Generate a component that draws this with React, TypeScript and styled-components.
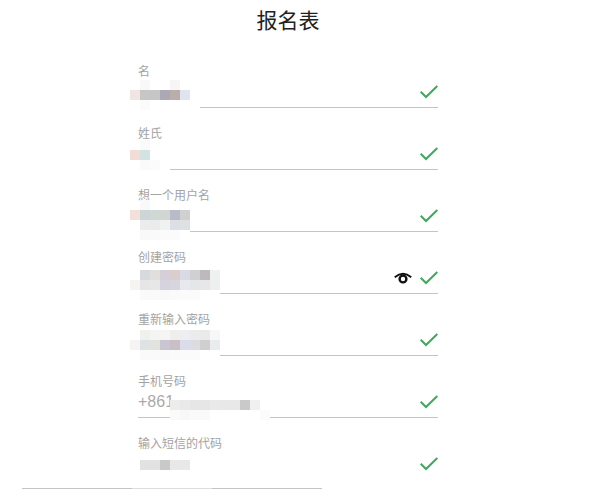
import React from 'react';
import styled, { createGlobalStyle } from 'styled-components';

const GlobalStyle = createGlobalStyle`
  html, body {
    margin: 0;
    padding: 0;
    background: #fff;
    overflow: hidden;
  }
`;

const Page = styled.div`
  width: 608px;
  height: 489px;
  overflow: hidden;
  font-family: "Noto Sans CJK SC", "Liberation Sans", sans-serif;
`;

const Title = styled.h1`
  margin: 0;
  width: 576px;
  height: 46px;
  line-height: 38px;
  text-align: center;
  font-size: 21px;
  font-weight: 400;
  color: #222;
`;

const Form = styled.form`
  display: flex;
  flex-direction: column;
  width: 300px;
  margin-left: 138px;
`;

const Field = styled.div<{ $plain?: boolean }>`
  position: relative;
  box-sizing: border-box;
  height: 62px;
  padding-top: 18px;
  border-bottom: 1px solid ${p => (p.$plain ? 'transparent' : '#c4c4c4')};
`;

const Label = styled.label`
  display: block;
  height: 14px;
  line-height: 14px;
  font-size: 12px;
  color: #a3a3a3;
`;

const Control = styled.div`
  display: flex;
  align-items: center;
  justify-content: space-between;
  height: 24px;
  margin-top: 2px;
`;

const Value = styled.span`
  font-family: "Liberation Sans", sans-serif;
  font-size: 16px;
  color: #aaa;
`;

const Icons = styled.div`
  display: flex;
  align-items: center;
  gap: 8px;
`;

// pixelated blur over the personal data, sits on top of the underline too
const Mosaic = styled.div<{ $top: number }>`
  position: absolute;
  left: -8px;
  top: ${p => p.$top}px;
  display: flex;
  flex-direction: column;
`;

const MosaicRow = styled.div`
  display: flex;
  height: 10px;
`;

const Cell = styled.i.attrs<{ $c: string }>(p => ({
  style: { background: p.$c },
}))<{ $c: string }>`
  display: block;
  width: 10px;
  height: 10px;
`;

const Divider = styled.div`
  width: 300px;
  height: 1px;
  margin: 8px 0 0 22px;
  background: linear-gradient(
    to right,
    #c4c4c4 0 110px,
    #dcdcdc 110px 190px,
    #c4c4c4 190px
  );
`;

const Check = () => (
  <svg width="18" height="14" viewBox="0 0 18 14" fill="none">
    <path d="M0.7 6.8 L6 12 L17.3 1" stroke="#40a85c" strokeWidth="2" />
  </svg>
);

const Eye = () => (
  <svg width="18" height="12" viewBox="0 0 18 12" fill="none">
    <path d="M0.8 5.2 Q9 -1.6 17.2 5.2" stroke="#111" strokeWidth="2" />
    <circle cx="9" cy="7" r="3.4" stroke="#111" strokeWidth="2.4" />
  </svg>
);

const _ = 'transparent';
const w = '#fff';

const fields = [
  {
    label: '名',
    top: 34,
    rows: [
      [_, '#f8f8f7', _, _, '#f8f6f5', _, _],
      ['#efe6e3', '#c6c6c6', '#c6c6c6', '#aca8b4', '#b9aeaa', '#dfe4ee', _],
      [w, '#fbfbfb', w, w, w, w, w],
    ],
  },
  {
    label: '姓氏',
    top: 32,
    rows: [
      [_, '#fafafa', _, _],
      ['#f2ddd6', '#d3e3e2', _, _],
      [w, '#fafafa', '#fbfbfb', w],
    ],
  },
  {
    label: '想一个用户名',
    top: 30,
    rows: [
      [_, '#f9f9f9', _, _, _, _],
      ['#f3e0da', '#cdd5d8', '#d0d8d3', '#d1d5d4', '#b8bcc9', '#cfd1cf'],
      [w, '#ececec', '#eaeceb', '#f0f1f1', '#dcdfe3', '#dfe0e2'],
      [w, '#f9f9f9', '#fafafa', '#fbfbfb', '#fbfbfb', w],
    ],
  },
  {
    label: '创建密码',
    top: 38,
    rows: [
      [_, '#d6dadf', '#e1dfdc', '#d4cfdb', '#dccdcd', '#d8dbe6', '#d0cfd2', '#bdb9bd', '#eef1f0'],
      ['#f6f4f2', '#e6e6e6', '#e7e7e7', '#d7d3de', '#d9d5df', '#e7e9ef', '#e4e6e8', '#e6e7e9', '#eef0f0'],
      [w, '#fafafa', '#fafafa', '#f9f9f9', '#fafafa', '#fbfbfb', '#fbfbfb', w, w],
    ],
  },
  {
    label: '重新输入密码',
    top: 36,
    rows: [
      [_, '#f0f0ee', '#f4f4f2', '#f5f5f3', '#eeeeec', '#eeeef2', '#ecebec', '#ebeaea', '#f6f7f6'],
      ['#f6f4f2', '#dde2e4', '#e2e2de', '#c9c5d2', '#c9bfc4', '#dadcea', '#dcdce0', '#cfcfd0', '#e8ecec'],
      [w, '#fafafa', '#fafafa', '#f9f9f9', '#fafafa', '#fbfbfb', '#fbfbfb', w, w],
    ],
  },
  {
    label: '手机号码',
    value: '+861',
    top: 44,
    rows: [
      [_, _, _, _, '#ececec', '#e9e9e9', '#e6e6e6', '#e6e6e6', '#e9e9e9', '#e8e8e8', '#e8e8e8', '#c9c9c9', '#f0f0f0'],
      [_, _, _, _, '#fafafa', '#f8f8f8', '#fafafa', '#fafafa', w, w, w, w, w, '#fbfbfb'],
    ],
  },
  {
    label: '输入短信的代码',
    top: 42,
    rows: [
      [_, '#e2e2e2', '#e2e2e2', '#c9c9c9', '#e8e8e8', '#e8e8e8'],
    ],
  },
];

const App = () => (
  <Page>
    <GlobalStyle />
    <Title>报名表</Title>
    <Form>
      {fields.map((f, i) => (
        <Field key={f.label} $plain={i === fields.length - 1}>
          <Label>{f.label}</Label>
          <Control>
            <Value>{f.value}</Value>
            <Icons>
              {i === 3 && <Eye />}
              <Check />
            </Icons>
          </Control>
          <Mosaic $top={f.top}>
            {f.rows.map((row, r) => (
              <MosaicRow key={r}>
                {row.map((c, n) => <Cell key={n} $c={c} />)}
              </MosaicRow>
            ))}
          </Mosaic>
        </Field>
      ))}
    </Form>
    <Divider />
  </Page>
);

export default App;
